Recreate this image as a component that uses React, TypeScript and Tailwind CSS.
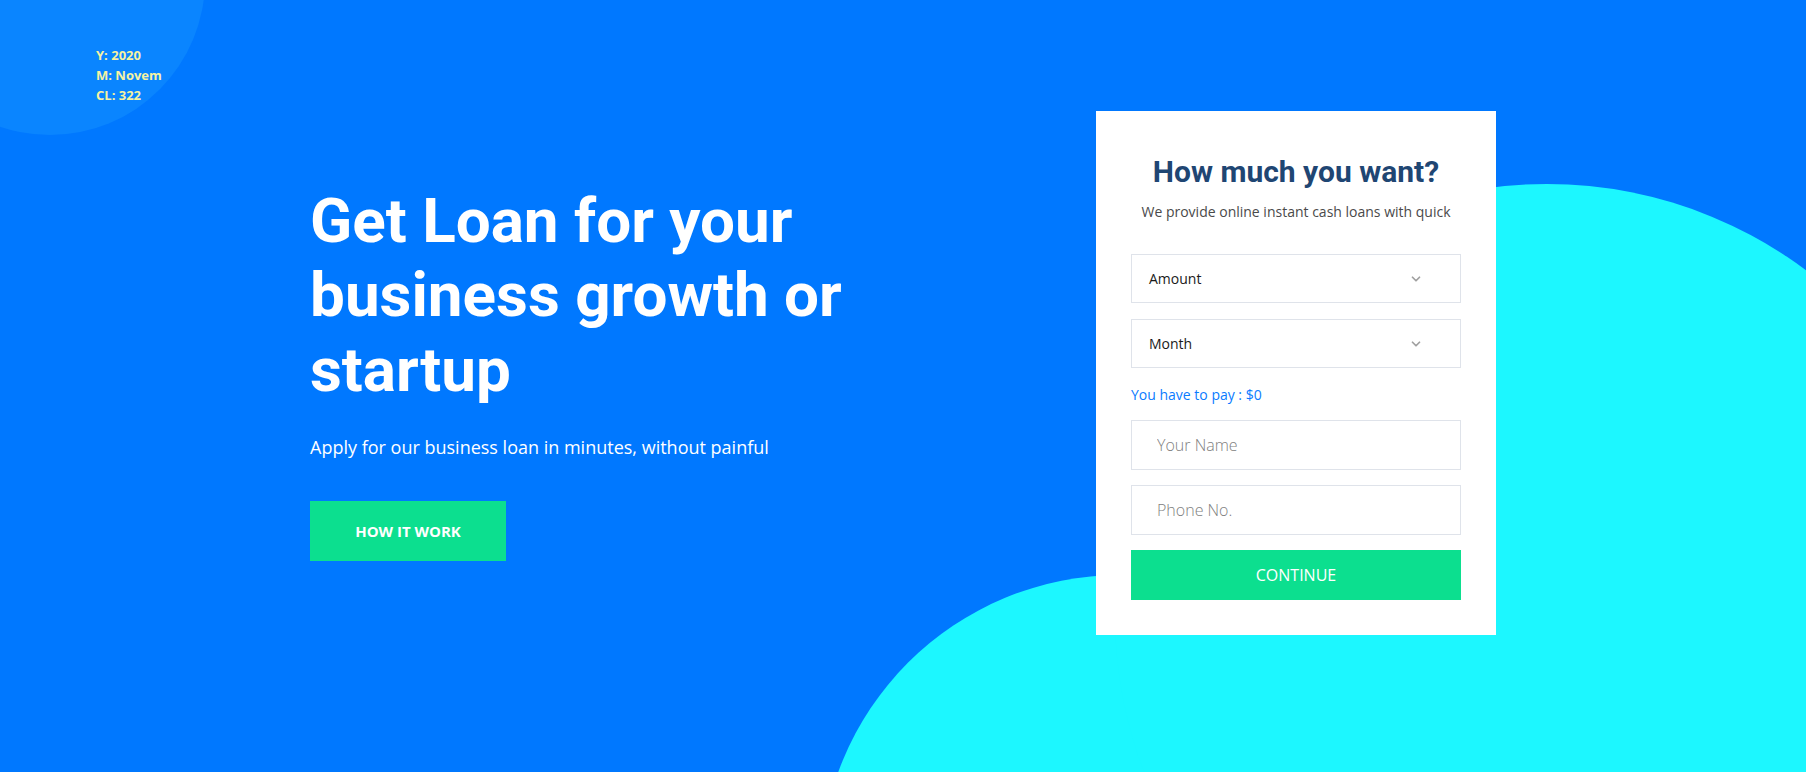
import React from "react";
import { ChevronDown } from "lucide-react";

const Stats: React.FC = () => (
  <div className="absolute left-[96px] top-[45px] text-[13px] leading-[20px] font-bold text-[#f6f3a2] font-['Open_Sans',sans-serif]">
    <div>Y: 2020</div>
    <div>M: Novem</div>
    <div>CL: 322</div>
  </div>
);

const FakeSelect: React.FC<{ label: string }> = ({ label }) => (
  <div className="flex items-center justify-between h-[49px] border border-[#dfe3ea] pl-[17px] pr-[37px] text-[14px] text-[#1a1a1a]">
    <span>{label}</span>
    <ChevronDown className="w-[14px] h-[14px] text-[#a0a0a0]" strokeWidth={3} />
  </div>
);

const LoanCard: React.FC = () => (
  <div className="w-[400px] bg-white px-[35px] pt-[43px] pb-[35px] font-['Open_Sans',sans-serif]">
    <h2 className="text-center text-[30px] leading-[36px] font-bold text-[#1f4673] font-['Roboto',sans-serif]">
      How much you want?
    </h2>
    <p className="mt-[11px] text-center text-[14px] leading-[22px] text-[#4a4a4a]">
      We provide online instant cash loans with quick
    </p>
    <div className="mt-[31px] flex flex-col gap-[16px]">
      <FakeSelect label="Amount" />
      <FakeSelect label="Month" />
    </div>
    <div className="mt-[17px] text-[14px] leading-[20px] text-[#0a7bff]">You have to pay : $0</div>
    <div className="mt-[15px] flex flex-col gap-[15px]">
      <input
        placeholder="Your Name"
        className="h-[50px] w-full border border-[#dfe3ea] px-[25px] text-[16px] font-light outline-none placeholder:text-[#808080]"
      />
      <input
        placeholder="Phone No."
        className="h-[50px] w-full border border-[#dfe3ea] px-[25px] text-[16px] font-light outline-none placeholder:text-[#808080]"
      />
      <button className="h-[50px] w-full bg-[#0cdf8f] text-[16px] text-white">CONTINUE</button>
    </div>
  </div>
);

const App: React.FC = () => {
  return (
    <div className="relative w-full h-[772px] overflow-hidden bg-[#0078ff]">
      <svg className="absolute inset-0" width="1806" height="772" viewBox="0 0 1806 772">
        <circle cx="50" cy="-20" r="155" fill="#0a85ff" />
        <circle cx="1120" cy="875" r="300" fill="#1cf7ff" />
        <circle cx="1547" cy="616" r="432" fill="#1cf7ff" />
      </svg>
      <Stats />

      <div className="relative flex items-start pl-[310px] pt-[111px]">
        <div className="w-[786px] mt-[73px]">
          <h1 className="text-[62px] leading-[74.4px] font-bold text-white font-['Roboto',sans-serif]">
            Get Loan for your
            <br />
            business growth or
            <br />
            startup
          </h1>
          <p className="mt-[27px] text-[18px] leading-[27px] text-white font-['Open_Sans',sans-serif]">
            Apply for our business loan in minutes, without painful
          </p>
          <button className="mt-[40px] h-[60px] w-[196px] bg-[#0cdf8f] text-[15px] font-bold text-white font-['Open_Sans',sans-serif]">
            HOW IT WORK
          </button>
        </div>
        <LoanCard />
      </div>
    </div>
  );
};

export default App;
